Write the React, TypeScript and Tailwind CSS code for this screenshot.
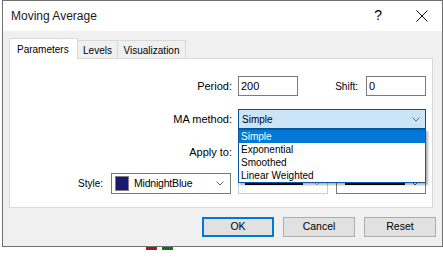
import React from "react";

function Chevron({ color = "#606060" }: { color?: string }) {
  return (
    <svg width="8" height="5" viewBox="0 0 8 5" className="block">
      <polyline points="0.5,0.5 4,4 7.5,0.5" fill="none" stroke={color} strokeWidth="1" />
    </svg>
  );
}

export default function App() {
  const items = ["Simple", "Exponential", "Smoothed", "Linear Weighted"];
  return (
    <div className="w-[443px] h-[260px] bg-white overflow-hidden font-['Liberation_Sans',Arial,sans-serif] text-black">
      <div className="ml-[2px] w-[441px] h-[247px] border border-[#707070] flex flex-col">
        {/* Title bar */}
        <div className="h-[30px] bg-white flex items-center shrink-0">
          <span className="pl-[8px] text-[12px] text-[#1a1a1a]">Moving Average</span>
          <span className="ml-auto text-[14px] leading-none mr-[34px] mt-[-2px]">?</span>
          <svg width="12" height="12" viewBox="0 0 12 12" className="mr-[14px]">
            <path d="M0.5 0.5 L11.5 11.5 M11.5 0.5 L0.5 11.5" stroke="#111" strokeWidth="1" />
          </svg>
        </div>
        {/* Body */}
        <div className="flex-1 bg-[#f0f0f0] pl-[6px] pt-[7px]">
          {/* Tabs */}
          <div className="flex items-end h-[20px]">
            <div className="relative z-10 -mb-px w-[69px] h-[21px] bg-white border border-b-0 border-[#d9d9d9] text-[10px] pl-[7px] pt-[3px]">
              Parameters
            </div>
            <div className="w-[40px] h-[18px] border-t border-r border-[#d9d9d9] text-[10px] flex items-center justify-center pt-[1px]">
              Levels
            </div>
            <div className="w-[68px] h-[18px] border-t border-r border-[#d9d9d9] text-[10px] flex items-center justify-center pt-[1px]">
              Visualization
            </div>
          </div>
          {/* Panel */}
          <div className="w-[424px] h-[150px] bg-white border border-[#d9d9d9] text-[11px]">
            {/* Row 1 */}
            <div className="mt-[17px] h-[20px] flex items-center">
              <div className="w-[222px] text-right">Period:</div>
              <div className="ml-[6px] w-[60px] h-[20px] border border-[#7a7a7a] pl-[2px] flex items-center">200</div>
              <div className="w-[60px] text-right text-[10px]">Shift:</div>
              <div className="ml-[8px] w-[60px] h-[20px] border border-[#7a7a7a] pl-[2px] flex items-center">0</div>
            </div>
            {/* Row 2 */}
            <div className="mt-[13px] h-[20px] flex items-center">
              <div className="w-[222px] text-right">MA method:</div>
              <div className="relative ml-[6px] w-[188px] h-[20px] border border-[#005499] bg-[#cce4f7] flex items-center pl-[3px] text-[10px]">
                <span>Simple</span>
                <span className="ml-auto mr-[5px]">
                  <Chevron />
                </span>
                <div className="absolute left-[-1px] top-[19px] z-20 w-[188px] h-[54px] bg-white border border-[#0b5aa6] shadow-[2px_2px_2px_rgba(0,0,0,0.3)]">
                  {items.map((it, i) => (
                    <div
                      key={it}
                      className={
                        i === 0
                          ? "h-[13px] leading-[13px] pl-[2px] text-[10px] bg-[#0078d7] text-white"
                          : "h-[13px] leading-[13px] pl-[2px] text-[10px]"
                      }
                    >
                      {it}
                    </div>
                  ))}
                </div>
              </div>
            </div>
            {/* Row 3 */}
            <div className="mt-[13px] h-[20px] flex items-center">
              <div className="w-[222px] text-right">Apply to:</div>
              <div className="ml-[6px] w-[188px] h-[20px] border border-[#7a7a7a]"></div>
            </div>
            {/* Row 4 */}
            <div className="mt-[11px] h-[21px] flex items-center">
              <div className="w-[93px] text-right text-[10px]">Style:</div>
              <div className="ml-[8px] w-[120px] h-[21px] border border-[#7a7a7a] flex items-center pl-[3px] text-[10.5px]">
                <div className="w-[14px] h-[15px] border border-[#808080] bg-[#191970]"></div>
                <span className="ml-[5px] tracking-[-0.2px]">MidnightBlue</span>
                <span className="ml-auto mr-[6px]">
                  <Chevron />
                </span>
              </div>
              <div className="ml-[7px] w-[90px] h-[21px] border border-[#cccccc] flex items-center pl-[6px]">
                <div className="w-[58px] h-[2px] bg-black"></div>
                <span className="ml-auto mr-[6px]">
                  <Chevron color="#c0c0c0" />
                </span>
              </div>
              <div className="ml-[8px] w-[90px] h-[21px] border border-[#7a7a7a] flex items-center pl-[8px]">
                <div className="w-[60px] h-[3px] bg-black"></div>
                <span className="ml-auto mr-[6px]">
                  <Chevron />
                </span>
              </div>
            </div>
          </div>
          {/* Buttons */}
          <div className="mt-[9px] flex justify-end gap-[9px] pr-[6px] text-[10.5px]">
            <div className="w-[72px] h-[20px] bg-[#e1e1e1] border-2 border-[#0078d7] flex items-center justify-center">OK</div>
            <div className="w-[72px] h-[20px] bg-[#e1e1e1] border border-[#adadad] flex items-center justify-center">Cancel</div>
            <div className="w-[72px] h-[20px] bg-[#e1e1e1] border border-[#adadad] flex items-center justify-center">Reset</div>
          </div>
        </div>
      </div>
      <div className="flex">
        <div className="ml-[146px] w-[11px] h-[3px] bg-[#a01c1c]"></div>
        <div className="ml-[5px] w-[11px] h-[3px] bg-[#1c6b1c]"></div>
      </div>
    </div>
  );
}
